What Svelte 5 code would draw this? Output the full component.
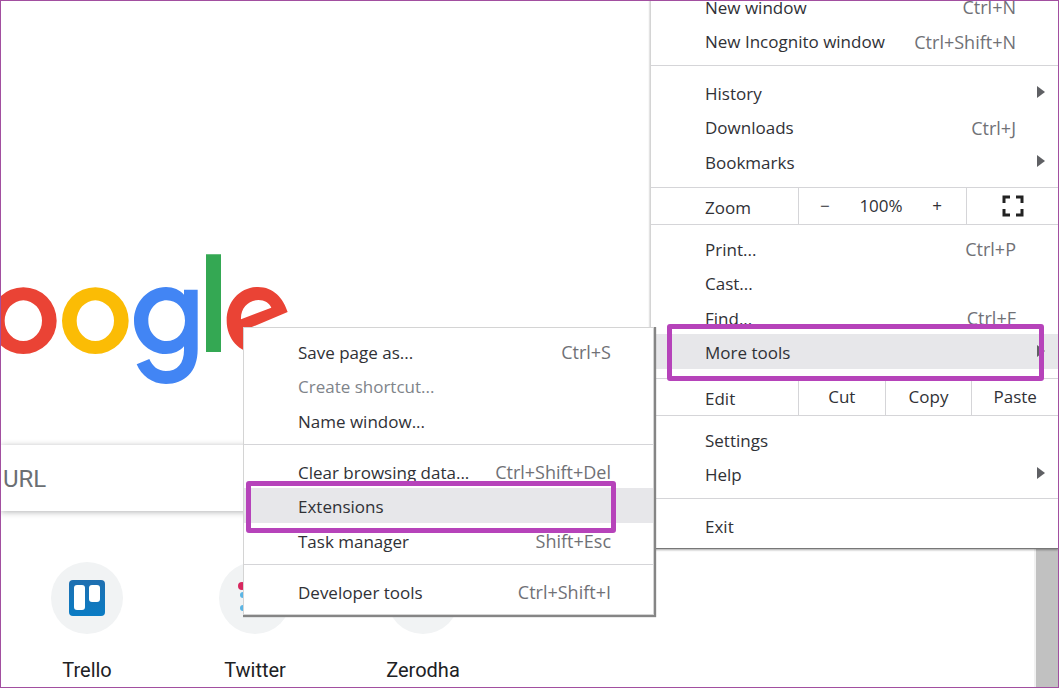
<script>
  const mainGroups = {
    windows: [
      { label: 'New window', keys: 'Ctrl+N' },
      { label: 'New Incognito window', keys: 'Ctrl+Shift+N' }
    ],
    history: [
      { label: 'History', submenu: true },
      { label: 'Downloads', keys: 'Ctrl+J' },
      { label: 'Bookmarks', submenu: true }
    ],
    page: [
      { label: 'Print...', keys: 'Ctrl+P' },
      { label: 'Cast...' },
      { label: 'Find...', keys: 'Ctrl+F' },
      { label: 'More tools', submenu: true, active: true }
    ],
    settings: [
      { label: 'Settings' },
      { label: 'Help', submenu: true }
    ],
    exit: [{ label: 'Exit' }]
  };

  const toolGroups = [
    [
      { label: 'Save page as...', keys: 'Ctrl+S' },
      { label: 'Create shortcut...', disabled: true },
      { label: 'Name window...' }
    ],
    [
      { label: 'Clear browsing data...', keys: 'Ctrl+Shift+Del' },
      { label: 'Extensions', active: true },
      { label: 'Task manager', keys: 'Shift+Esc' }
    ],
    [{ label: 'Developer tools', keys: 'Ctrl+Shift+I' }]
  ];

  const shortcuts = ['Trello', 'Twitter', 'Zerodha'];

  let zoom = $state(100);
</script>

{#snippet group(items, kind)}
  <div class="group {kind}">
    {#each items as item}
      <button class="item" class:active={item.active} disabled={item.disabled}>
        <span>{item.label}</span>
        {#if item.keys}
          <span class="keys">{item.keys}</span>
        {/if}
        {#if item.submenu}
          <svg class="arrow" viewBox="0 0 8 12" aria-hidden="true"><path d="M0 0 8 6 0 12z" /></svg>
        {/if}
      </button>
    {/each}
  </div>
{/snippet}

<div class="page">
  <main class="newtab">
    <svg class="logo" viewBox="3 0 897 480" role="img" aria-label="Google">
      <g fill-rule="evenodd">
        <path fill="#ea4335" d="M-30 242a100 100 0 1 0 200 0a100 100 0 1 0-200 0zM14 242a56 61 0 1 1 112 0a56 61 0 1 1-112 0z" />
        <path fill="#fbbc05" d="M186 242a100 100 0 1 0 200 0a100 100 0 1 0-200 0zM230 242a56 61 0 1 1 112 0a56 61 0 1 1-112 0z" />
        <path fill="#4285f4" d="M552 149H593V328C593 398 552 432 498 432C455 432 424 406 410 373L448 357C457 378 473 393 498 393C532 393 552 371 552 330V319C540 334 520 342 498 342C445 342 402 298 402 242C402 186 445 141 498 141C520 141 540 150 552 164zM500 181C470 181 445 207 445 242C445 277 470 303 500 303C531 303 555 277 555 242C555 207 531 181 500 181z" />
        <path fill="#34a853" d="M618 43h45v293h-45z" />
        <path fill="#ea4335" d="M863 216C850 174 820 141 774 141C721 141 680 184 680 242C680 299 722 342 778 342C816 342 842 324 858 300L825 278C814 294 800 303 779 303C757 303 742 293 732 271zM723 238C721 205 745 180 775 180C794 180 808 189 814 203z" />
      </g>
    </svg>

    <form class="search">
      <input type="text" placeholder="URL" aria-label="Search or type a URL" />
    </form>

    <nav class="shortcuts">
      {#each shortcuts as name}
        <a href="#{name.toLowerCase()}">
          <span class="badge">
            {#if name === 'Trello'}
              <svg viewBox="0 0 36 36" aria-hidden="true">
                <defs>
                  <linearGradient id="trello" x2="0" y2="1">
                    <stop offset="0" stop-color="#1f6fb0" />
                    <stop offset="1" stop-color="#0a7cc4" />
                  </linearGradient>
                </defs>
                <rect width="36" height="36" rx="4" fill="url(#trello)" />
                <rect x="5" y="5" width="11" height="25" rx="3" fill="#fff" />
                <rect x="20" y="5" width="11" height="17" rx="3" fill="#fff" />
              </svg>
            {:else if name === 'Twitter'}
              <svg viewBox="0 0 36 36" aria-hidden="true">
                <circle cx="5" cy="6" r="4" fill="#d7285f" />
                <circle cx="6" cy="15" r="3" fill="#5bb5e5" />
                <circle cx="6" cy="28" r="3" fill="#5bb5e5" />
              </svg>
            {/if}
          </span>
          {name}
        </a>
      {/each}
    </nav>
  </main>

  <div class="scrollbar"></div>

  <div class="menu main-menu">
    {@render group(mainGroups.windows, 'first')}
    {@render group(mainGroups.history, 'before-bar')}
    <div class="bar">
      <span class="bar-label">Zoom</span>
      <div class="zoom">
        <button aria-label="Zoom out" onclick={() => (zoom -= 10)}>−</button>
        <span>{zoom}%</span>
        <button aria-label="Zoom in" onclick={() => (zoom += 10)}>+</button>
      </div>
      <button class="fullscreen" aria-label="Full screen">
        <svg viewBox="0 0 22 22" aria-hidden="true">
          <path d="M2 8V2h6M14 2h6v6M20 14v6h-6M8 20H2v-6" />
        </svg>
      </button>
    </div>
    {@render group(mainGroups.page, 'after-bar before-bar')}
    <div class="bar">
      <span class="bar-label">Edit</span>
      <button class="edit">Cut</button>
      <button class="edit">Copy</button>
      <button class="edit">Paste</button>
    </div>
    {@render group(mainGroups.settings, 'after-bar')}
    {@render group(mainGroups.exit, '')}
  </div>

  <div class="menu tools-menu">
    {#each toolGroups as items, i}
      {@render group(items, i === 0 ? 'after-bar' : '')}
    {/each}
  </div>

  <div class="mark mark-tools"></div>
  <div class="mark mark-extensions"></div>
</div>

<style>
  :global(body) {
    margin: 0;
    background: #fff;
  }

  .page {
    position: relative;
    display: flex;
    box-sizing: border-box;
    min-height: 100vh;
    overflow: hidden;
    border: 1px solid #a24fa0;
    background: #fff;
  }

  .newtab {
    flex: 1;
    padding-top: 239px;
    font-family: Roboto, sans-serif;
  }

  .logo {
    display: block;
    width: 299px;
    height: 160px;
  }

  .search {
    width: 560px;
    margin-top: 45px;
    background: #fff;
    box-shadow: 0 1px 6px rgba(32, 33, 36, 0.35);
  }

  .search input {
    display: block;
    box-sizing: border-box;
    width: 100%;
    height: 66px;
    padding: 2px 2px 0;
    border: 0;
    outline: 0;
    background: none;
    font: 24px Roboto, sans-serif;
  }

  .search input::placeholder {
    color: #6b6f73;
    opacity: 1;
  }

  .shortcuts {
    display: flex;
    margin-top: 51px;
    padding-left: 2px;
  }

  .shortcuts a {
    display: flex;
    flex-direction: column;
    align-items: center;
    gap: 24px;
    width: 168px;
    color: #202124;
    font-size: 20px;
    line-height: 24px;
    text-decoration: none;
  }

  .badge {
    display: flex;
    align-items: center;
    justify-content: center;
    width: 72px;
    height: 72px;
    border-radius: 50%;
    background: #f1f3f4;
  }

  .badge svg {
    width: 36px;
    height: 36px;
  }

  .scrollbar {
    width: 22px;
    border-left: 2px solid #f1f1f1;
    background: #c1c1c1;
  }

  .menu {
    position: absolute;
    box-sizing: border-box;
    border: 1px solid #d4d4d4;
    background: #fff;
    color: #303136;
    font: 17px 'Open Sans', 'Noto Sans', sans-serif;
  }

  .menu button {
    border: 0;
    padding: 0;
    background: none;
    color: inherit;
    font: inherit;
  }

  .main-menu {
    top: -13px;
    right: 0;
    width: 408px;
    border-right: 0;
    border-bottom-color: #777;
    box-shadow: 0 1px 2px rgba(0, 0, 0, 0.35);
  }

  .tools-menu {
    top: 326px;
    right: 404px;
    width: 411px;
    box-shadow: 1px 1px 1px 1px #858585;
    clip-path: inset(0 -3px -3px 0);
  }

  .group {
    display: grid;
    grid-auto-rows: 34px 35px;
    padding: 9px 0 7px;
  }

  .group + .group,
  .group + .bar,
  .bar + .group {
    border-top: 1px solid #d5d5d8;
  }

  .group.first {
    padding-top: 0;
  }

  .group.after-bar {
    padding-top: 6px;
  }

  .group.before-bar {
    padding-bottom: 9px;
  }

  .group:last-child {
    padding-bottom: 6px;
  }

  .menu .item {
    position: relative;
    display: flex;
    align-items: center;
    justify-content: space-between;
    padding: 2px 42px 0 54px;
    white-space: nowrap;
  }

  .item.active {
    background: #e7e7ea;
  }

  .menu .item:disabled {
    color: #80848a;
  }

  .keys {
    color: #707176;
    font-size: 18px;
  }

  .arrow {
    position: absolute;
    top: 11px;
    right: 13px;
    width: 8px;
    height: 12px;
    fill: #5f6064;
  }

  .bar {
    display: flex;
    height: 36px;
    line-height: 36px;
  }

  .bar-label {
    box-sizing: border-box;
    width: 147px;
    padding: 2px 0 0 54px;
  }

  .zoom {
    display: flex;
    flex: 1;
    justify-content: space-between;
    padding: 0 24px 0 21px;
    border-left: 1px solid #d5d5d8;
  }

  .menu .fullscreen {
    display: flex;
    align-items: center;
    justify-content: center;
    width: 92px;
    border-left: 1px solid #d5d5d8;
  }

  .fullscreen svg {
    width: 22px;
    height: 22px;
    fill: none;
    stroke: #222;
    stroke-width: 3;
  }

  .menu .edit {
    flex: 1;
    border-left: 1px solid #d5d5d8;
  }

  .mark {
    position: absolute;
    box-sizing: border-box;
    border: 5px solid #b643ba;
    border-radius: 3px;
  }

  .mark-tools {
    top: 323px;
    right: 14px;
    width: 377px;
    height: 57px;
  }

  .mark-extensions {
    top: 480px;
    right: 442px;
    width: 370px;
    height: 52px;
  }
</style>
